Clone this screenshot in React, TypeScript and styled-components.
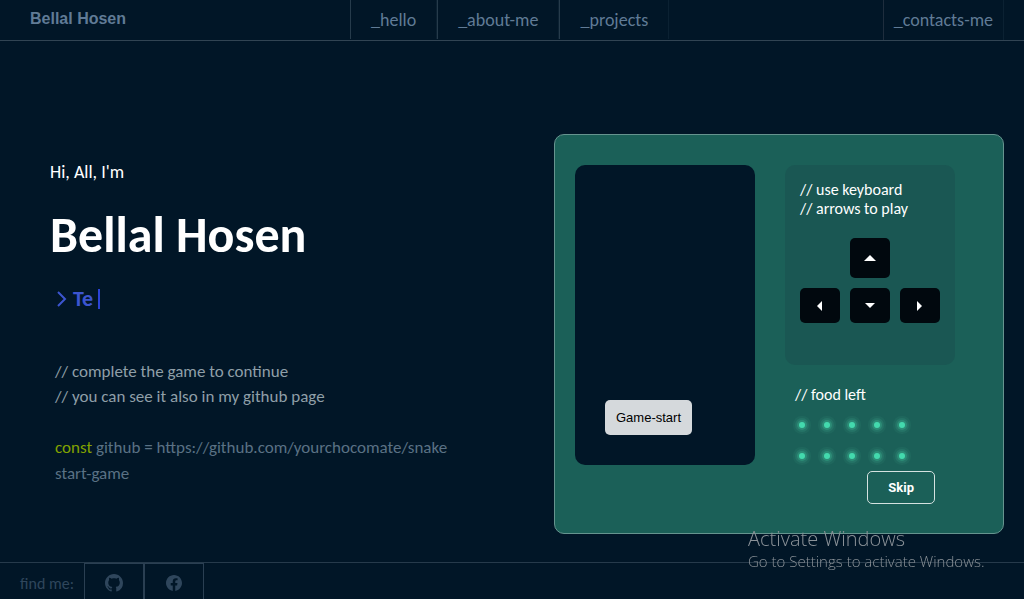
import React from "react";
import styled, { createGlobalStyle } from "styled-components";

const GlobalStyle = createGlobalStyle`
  * { box-sizing: border-box; }
  body {
    margin: 0;
    background: #011627;
    font-family: Calibri, Carlito, Lato, sans-serif;
    color: #ffffff;
  }
  h1, h2, p, ul { margin: 0; padding: 0; }
  a { color: inherit; text-decoration: none; }
  button { font-family: Arial, "Liberation Sans", sans-serif; cursor: pointer; }
`;

const Page = styled.div`
  display: flex;
  flex-direction: column;
  min-height: 100vh;
`;

const Header = styled.header`
  display: grid;
  grid-template-columns: 350px 1fr auto;
  height: 41px;
  padding-right: 20px;
  border-bottom: 1px solid #314453;
  color: #607b96;
`;

const Brand = styled.a`
  padding-left: 30px;
  font: bold 16px/38px Arial, "Liberation Sans", sans-serif;
`;

const Nav = styled.nav`
  display: flex;
  height: 39px;
`;

const NavLink = styled.a`
  padding: 0 20px;
  border-left: 1px solid #263b4b;
  border-right: 1px solid #0b2132;
  font-size: 18px;
  line-height: 40px;
`;

const ContactLink = styled.a`
  padding: 0 10px;
  border-left: 1px solid #1e2d3d;
  border-right: 1px solid #0b2132;
  font-size: 18px;
  line-height: 40px;
`;

const Main = styled.main`
  flex: 1;
  display: flex;
  justify-content: space-between;
  align-items: flex-start;
  padding: 93px 20px 28px 50px;
`;

const Intro = styled.section`
  padding-top: 26px;
`;

const Greeting = styled.p`
  font-size: 18px;
  line-height: 24px;
`;

const Name = styled.h1`
  margin-top: 21px;
  font-size: 50px;
  line-height: 60px;
`;

const Role = styled.h2`
  display: flex;
  align-items: center;
  gap: 6px;
  margin: 19px 0 0 6px;
  font-size: 22px;
  line-height: 30px;
  color: #3c55d0;

  &::after {
    content: "";
    width: 2px;
    height: 20px;
    margin-left: -1px;
    background: #2b43d6;
  }
`;

const Snippet = styled.div`
  margin: 45px 0 0 5px;
  font-size: 17px;
  line-height: 25px;
  color: #8f9fa8;
`;

const Code = styled.p`
  margin-top: 26px;
  line-height: 26px;
  color: #5a7184;
`;

const Keyword = styled.span`
  color: #83a300;
`;

const Game = styled.section`
  display: flex;
  align-items: flex-start;
  gap: 30px;
  width: 450px;
  min-height: 400px;
  padding: 30px 20px 20px;
  border: 1px solid #66948f;
  border-radius: 10px;
  background: #1b6058;
`;

const Screen = styled.div`
  display: flex;
  align-items: flex-end;
  width: 180px;
  height: 300px;
  padding: 30px;
  border-radius: 10px;
  background: #011627;
`;

const StartButton = styled.button`
  height: 35px;
  padding: 0 11px;
  border: 0;
  border-radius: 5px;
  background: #d5d9dc;
  color: #000000;
  font-size: 13px;
`;

const Side = styled.div`
  display: flex;
  flex-direction: column;
  width: 170px;
`;

const Controls = styled.div`
  height: 200px;
  padding: 15px;
  border-radius: 10px;
  background: #1a5753;
`;

const Hint = styled.p`
  font-size: 16px;
  line-height: 19px;
`;

const Pad = styled.div`
  display: grid;
  grid-template-columns: repeat(3, 40px);
  grid-template-rows: 40px 35px;
  gap: 10px;
  margin-top: 20px;
`;

const PadKey = styled.button<{ $top?: boolean }>`
  display: grid;
  place-items: center;
  grid-column: ${(p) => (p.$top ? "1 / -1" : "auto")};
  justify-self: center;
  width: 40px;
  padding: 0;
  border: 0;
  border-radius: 5px;
  background: #01080e;
  color: #ffffff;
`;

const FoodLeft = styled.div`
  padding: 20px 10px 0;
`;

const Food = styled.ul`
  display: grid;
  grid-template-columns: repeat(5, 6px);
  gap: 25px 19px;
  padding: 18px 4px 0;
  list-style: none;
`;

const Dot = styled.li`
  width: 6px;
  height: 6px;
  border-radius: 50%;
  background: #43d9ad;
  box-shadow: 0 0 0 2px #2c8c76, 0 0 0 4px #257467, 0 0 0 6px #1f675d;
`;

const SkipButton = styled.button`
  align-self: flex-end;
  height: 33px;
  margin: 12px 20px 0 0;
  padding: 0 20px;
  border: 1px solid #d5e2e0;
  border-radius: 5px;
  background: transparent;
  color: #ffffff;
  font-family: Roboto, Arial, sans-serif;
  font-size: 13px;
  font-weight: bold;
`;

const Footer = styled.footer`
  display: flex;
  height: 37px;
  padding-left: 20px;
  border-top: 1px solid #263a4b;
  color: #2f465c;
`;

const FindMe = styled.span`
  width: 64px;
  font-size: 16px;
  line-height: 42px;
`;

const Social = styled.a`
  display: grid;
  place-items: center;
  width: 60px;
  padding-top: 3px;
  border: 1px solid #2a3f52;
  border-bottom: 0;
`;

const Notice = styled.aside`
  position: fixed;
  right: 40px;
  bottom: 28px;
  width: 236px;
  font-family: "Segoe UI", "Open Sans", sans-serif;
  font-size: 15px;
  font-weight: 300;
  line-height: 20px;
  color: #8b9298;
  white-space: nowrap;
  pointer-events: none;
`;

const NoticeTitle = styled.p`
  font-size: 20px;
  line-height: 24px;
`;

const triangles = {
  up: { d: "M0 6 6 0l6 6z", w: 12, h: 6 },
  left: { d: "M5 0v10L0 5z", w: 6, h: 10 },
  down: { d: "M0 0h10L5 5z", w: 10, h: 5 },
  right: { d: "M0 0v10l5-5z", w: 6, h: 10 },
};

function Arrow({ dir }: { dir: keyof typeof triangles }) {
  const { d, w, h } = triangles[dir];
  return (
    <svg width={w} height={h} viewBox={`0 0 ${w} ${h}`} fill="currentColor" aria-hidden="true">
      <path d={d} />
    </svg>
  );
}

export default function App() {
  return (
    <>
      <GlobalStyle />
      <Page>
        <Header>
          <Brand href="#home">Bellal Hosen</Brand>
          <Nav>
            <NavLink href="#hello">_hello</NavLink>
            <NavLink href="#about">_about-me</NavLink>
            <NavLink href="#projects">_projects</NavLink>
          </Nav>
          <ContactLink href="#contacts">_contacts-me</ContactLink>
        </Header>

        <Main>
          <Intro>
            <Greeting>Hi, All, I'm</Greeting>
            <Name>Bellal Hosen</Name>
            <Role>
              <svg width="11" height="16" viewBox="0 0 11 16" fill="none" stroke="currentColor" strokeWidth="2" aria-hidden="true">
                <path d="M2 1l7 7-7 7" />
              </svg>
              Te
            </Role>
            <Snippet>
              <p>// complete the game to continue</p>
              <p>// you can see it also in my github page</p>
              <Code>
                <Keyword>const</Keyword> github = https://github.com/yourchocomate/snake
                <br />
                start-game
              </Code>
            </Snippet>
          </Intro>

          <Game>
            <Screen>
              <StartButton>Game-start</StartButton>
            </Screen>
            <Side>
              <Controls>
                <Hint>// use keyboard</Hint>
                <Hint>// arrows to play</Hint>
                <Pad>
                  <PadKey $top aria-label="Up"><Arrow dir="up" /></PadKey>
                  <PadKey aria-label="Left"><Arrow dir="left" /></PadKey>
                  <PadKey aria-label="Down"><Arrow dir="down" /></PadKey>
                  <PadKey aria-label="Right"><Arrow dir="right" /></PadKey>
                </Pad>
              </Controls>
              <FoodLeft>
                <Hint>// food left</Hint>
                <Food>
                  {Array.from({ length: 10 }, (_, i) => <Dot key={i} />)}
                </Food>
              </FoodLeft>
              <SkipButton>Skip</SkipButton>
            </Side>
          </Game>
        </Main>

        <Footer>
          <FindMe>find me:</FindMe>
          <Social href="#github" aria-label="GitHub">
            <svg width="18" height="18" viewBox="0 0 16 16" fill="currentColor">
              <path d="M8 0C3.580 0 0 3.580 0 8c0 3.540 2.290 6.530 5.470 7.590.4.070.55-.17.55-.38 0-.19-.01-.82-.01-1.490-2.010.37-2.530-.49-2.690-.94-.09-.23-.48-.94-.82-1.130-.28-.15-.68-.52-.01-.53.63-.01 1.080.58 1.230.82.72 1.210 1.870.87 2.330.66.070-.52.28-.87.51-1.070-1.780-.2-3.640-.89-3.640-3.950 0-.87.31-1.590.82-2.150-.08-.2-.36-1.020.08-2.120 0 0 .67-.21 2.200.82.64-.18 1.320-.27 2-.27s1.360.09 2 .27c1.530-1.040 2.200-.82 2.200-.82.44 1.100.16 1.920.08 2.120.51.56.82 1.270.82 2.150 0 3.070-1.870 3.750-3.650 3.950.29.25.54.73.54 1.480 0 1.070-.01 1.930-.01 2.200 0 .21.15.46.55.38A8.010 8.010 0 0 0 16 8c0-4.420-3.580-8-8-8z" />
            </svg>
          </Social>
          <Social href="#facebook" aria-label="Facebook">
            <svg width="16" height="16" viewBox="0 0 16 16" fill="currentColor">
              <path d="M16 8.050C16 3.600 12.420 0 8 0S0 3.600 0 8.050C0 12.070 2.930 15.400 6.750 16v-5.620H4.720V8.050h2.030V6.280c0-2.020 1.200-3.130 3.020-3.130.88 0 1.790.16 1.790.16v1.980h-1c-.99 0-1.310.62-1.310 1.260v1.500h2.220l-.35 2.330H9.250V16C13.080 15.400 16 12.070 16 8.050z" />
            </svg>
          </Social>
        </Footer>
      </Page>
      <Notice>
        <NoticeTitle>Activate Windows</NoticeTitle>
        <p>Go to Settings to activate Windows.</p>
      </Notice>
    </>
  );
}
